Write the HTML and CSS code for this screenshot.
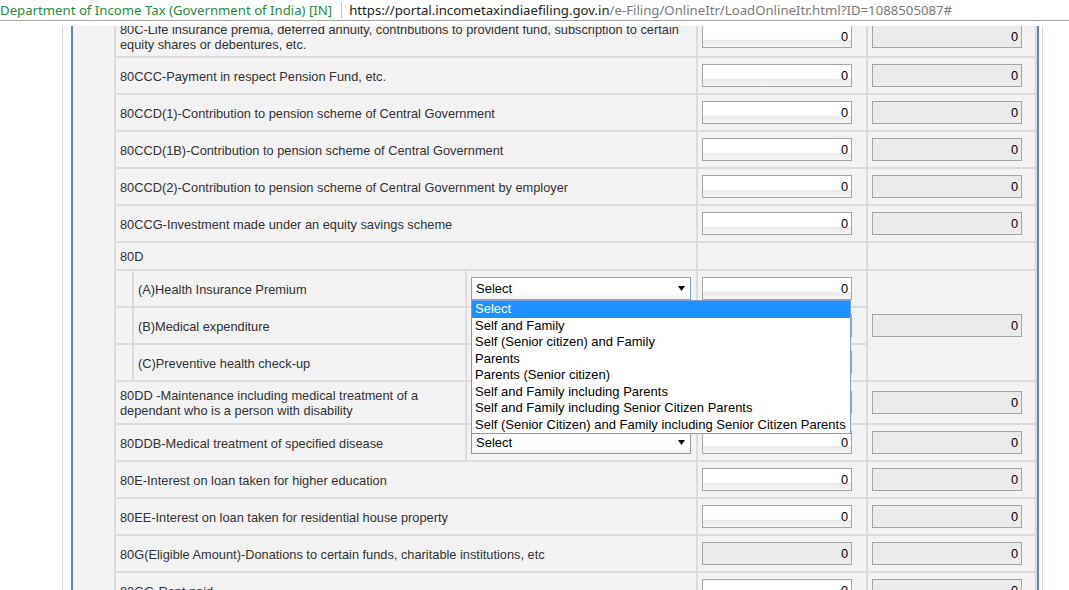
FILE: index.html
```html
<!DOCTYPE html>
<html>
<head>
<meta charset="utf-8">
<title>Online ITR</title>
<link rel="stylesheet" href="styles.css">
</head>
<body>
<div class="bar">
  <span class="site">Department of Income Tax (Government of India) [IN]</span>
  <span class="sep"></span>
  <span class="url"><span class="host">https://portal.incometaxindiaefiling.gov.in</span>/e-Filing/OnlineItr/LoadOnlineItr.html?ID=1088505087#</span>
</div>
<div class="viewport">
  <div class="outer">
    <div class="panel">
      <table class="grid">
        <colgroup>
          <col class="c0"><col class="c1"><col class="c2"><col class="c3"><col class="c4">
        </colgroup>
        <tr>
          <td colspan="3" class="lbl">80C-Life insurance premia, deferred annuity, contributions to provident fund, subscription to certain<br>equity shares or debentures, etc.</td>
          <td><input class="num" value="0"></td>
          <td><input class="num off" value="0" disabled></td>
        </tr>
        <tr>
          <td colspan="3" class="lbl">80CCC-Payment in respect Pension Fund, etc.</td>
          <td><input class="num" value="0"></td>
          <td><input class="num off" value="0" disabled></td>
        </tr>
        <tr>
          <td colspan="3" class="lbl">80CCD(1)-Contribution to pension scheme of Central Government</td>
          <td><input class="num" value="0"></td>
          <td><input class="num off" value="0" disabled></td>
        </tr>
        <tr>
          <td colspan="3" class="lbl">80CCD(1B)-Contribution to pension scheme of Central Government</td>
          <td><input class="num" value="0"></td>
          <td><input class="num off" value="0" disabled></td>
        </tr>
        <tr>
          <td colspan="3" class="lbl">80CCD(2)-Contribution to pension scheme of Central Government by employer</td>
          <td><input class="num" value="0"></td>
          <td><input class="num off" value="0" disabled></td>
        </tr>
        <tr>
          <td colspan="3" class="lbl">80CCG-Investment made under an equity savings scheme</td>
          <td><input class="num" value="0"></td>
          <td><input class="num off" value="0" disabled></td>
        </tr>
        <tr>
          <td colspan="3" class="lbl sec">80D</td>
          <td class="sec"></td>
          <td class="sec"></td>
        </tr>
        <tr>
          <td></td>
          <td class="lbl">(A)Health Insurance Premium</td>
          <td>
            <div class="selwrap">
              <div class="sel focus"><span>Select</span><svg class="arr" width="7" height="5" viewBox="0 0 7 5"><polygon points="0,0 7,0 3.5,5" fill="#000"/></svg></div>
              <ul class="list">
                <li class="on">Select</li>
                <li>Self and Family</li>
                <li>Self (Senior citizen) and Family</li>
                <li>Parents</li>
                <li>Parents (Senior citizen)</li>
                <li>Self and Family including Parents</li>
                <li>Self and Family including Senior Citizen Parents</li>
                <li>Self (Senior Citizen) and Family including Senior Citizen Parents</li>
              </ul>
            </div>
          </td>
          <td><input class="num" value="0"></td>
          <td rowspan="3"><input class="num off" value="0" disabled></td>
        </tr>
        <tr>
          <td></td>
          <td class="lbl">(B)Medical expenditure</td>
          <td><div class="sel"></div></td>
          <td><input class="num" value="0"></td>
        </tr>
        <tr>
          <td></td>
          <td class="lbl">(C)Preventive health check-up</td>
          <td><div class="sel"></div></td>
          <td><input class="num" value="0"></td>
        </tr>
        <tr>
          <td colspan="2" class="lbl two">80DD -Maintenance including medical treatment of a<br>dependant who is a person with disability</td>
          <td><div class="sel"></div></td>
          <td><input class="num" value="0"></td>
          <td><input class="num off" value="0" disabled></td>
        </tr>
        <tr>
          <td colspan="2" class="lbl">80DDB-Medical treatment of specified disease</td>
          <td><div class="sel"><span>Select</span><svg class="arr" width="7" height="5" viewBox="0 0 7 5"><polygon points="0,0 7,0 3.5,5" fill="#000"/></svg></div></td>
          <td><input class="num" value="0"></td>
          <td><input class="num off" value="0" disabled></td>
        </tr>
        <tr>
          <td colspan="3" class="lbl">80E-Interest on loan taken for higher education</td>
          <td><input class="num" value="0"></td>
          <td><input class="num off" value="0" disabled></td>
        </tr>
        <tr>
          <td colspan="3" class="lbl">80EE-Interest on loan taken for residential house property</td>
          <td><input class="num" value="0"></td>
          <td><input class="num off" value="0" disabled></td>
        </tr>
        <tr>
          <td colspan="3" class="lbl">80G(Eligible Amount)-Donations to certain funds, charitable institutions, etc</td>
          <td><input class="num off" value="0" disabled></td>
          <td><input class="num off" value="0" disabled></td>
        </tr>
        <tr>
          <td colspan="3" class="lbl">80GG-Rent paid</td>
          <td><input class="num" value="0"></td>
          <td><input class="num off" value="0" disabled></td>
        </tr>
      </table>
    </div>
  </div>
</div>
</body>
</html>
```
FILE: styles.css
```css
html, body {
  margin: 0;
  padding: 0;
  background: #ffffff;
  overflow: hidden;
}

body {
  font-family: "Liberation Sans", Arial, sans-serif;
}

.bar {
  height: 20px;
  border-bottom: 1px solid #a8a8a8;
  margin-bottom: 5px;
  display: flex;
  align-items: center;
  font-family: "Noto Sans", "Open Sans", sans-serif;
  font-size: 13.2px;
  white-space: nowrap;
}

.site {
  color: #1f8a3e;
}

.sep {
  width: 1px;
  height: 16px;
  background: #c8c8c8;
  margin: 0 7px 0 9px;
}

.url {
  color: #7a7a7a;
}

.host {
  color: #1c1c1c;
}

.viewport {
  height: 564px;
  overflow: hidden;
}

.outer {
  display: flow-root;
  margin-left: 62px;
  width: 968px;
  height: 100%;
  border-left: 1px solid #dadada;
  border-right: 1px solid #dadada;
  padding: 0 3px 0 8px;
}

.panel {
  margin-top: -12px;
  border-left: 2px solid #5f87b7;
  border-right: 2px solid #5f87b7;
  background: #f2f2f2;
  padding-left: 41px;
}

.grid {
  width: 923px;
  table-layout: fixed;
  border-collapse: separate;
  border-spacing: 2px;
  background: #dcdcdc;
}

.c0 { width: 16px; }
.c1 { width: 331px; }
.c2 { width: 229px; }
.c3 { width: 168px; }
.c4 { width: 167px; }

.grid td {
  background: #f2f2f2;
  padding: 5px 4px;
  vertical-align: middle;
  font-size: 12.8px;
  line-height: 15px;
  color: #333333;
}

.grid td.lbl {
  padding: 6px 4px 4px;
}

.grid td.sec,
.grid td.two {
  padding: 6px 4px 5px;
}

.num {
  display: block;
  box-sizing: border-box;
  width: 150px;
  height: 23px;
  margin: 1px 0;
  padding: 0 3px;
  border: 1px solid #a5a5a5;
  border-radius: 0;
  background: linear-gradient(to bottom, #ffffff 0, #ffffff 64%, #e9e9e9 66%, #f5f5f5 100%);
  font-family: "Liberation Sans", Arial, sans-serif;
  font-size: 12.8px;
  color: #000000;
  text-align: right;
  outline: none;
}

.num.off {
  background: #ebebeb;
  color: #000000;
  opacity: 1;
}

.selwrap {
  position: relative;
}

.sel {
  box-sizing: border-box;
  width: 220px;
  height: 23px;
  margin: 1px 0;
  padding: 0 5px 0 4px;
  border: 1px solid #9a9a9a;
  background: linear-gradient(to bottom, #ffffff 0, #ffffff 70%, #f1f1f1 100%);
  display: flex;
  align-items: center;
  justify-content: space-between;
  font-size: 13px;
  color: #000000;
}

.sel.focus {
  border-color: #7ea6da;
}

.arr {
  display: block;
}

.list {
  position: absolute;
  top: 23px;
  left: 0;
  z-index: 10;
  width: 380px;
  box-sizing: border-box;
  margin: 0;
  padding: 0;
  list-style: none;
  border: 1px solid #7d9dd0;
  background: #ffffff;
  font-size: 13px;
  line-height: 16.5px;
  color: #000000;
}

.list li {
  padding: 0 3px;
  white-space: nowrap;
}

.list li.on {
  background: #1e90ff;
  color: #ffffff;
}
```
